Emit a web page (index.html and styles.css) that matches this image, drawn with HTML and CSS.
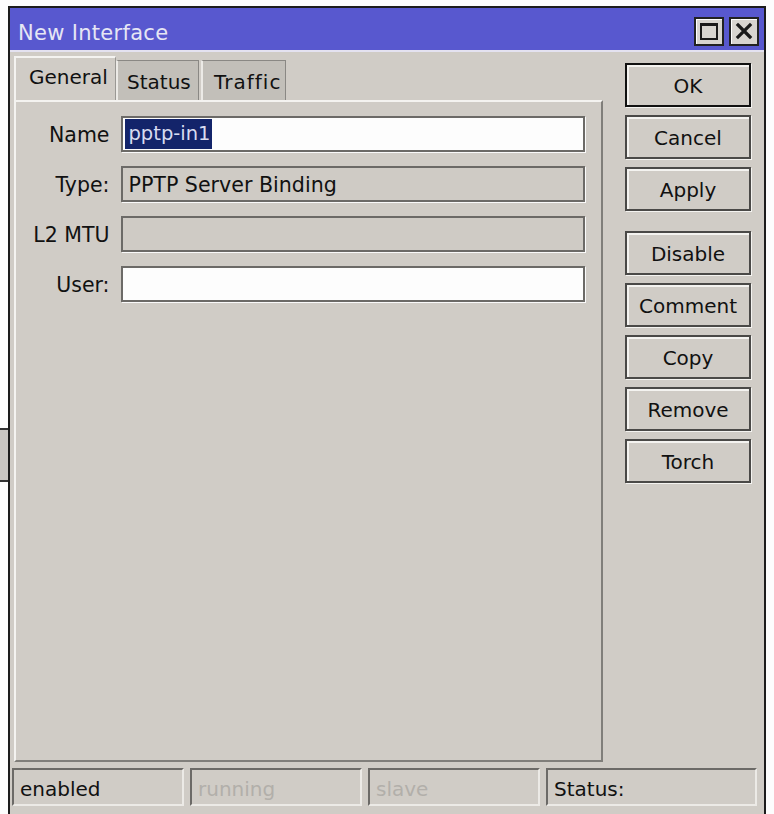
FILE: index.html
```html
<!DOCTYPE html>
<html>
<head>
<meta charset="utf-8">
<link rel="stylesheet" href="styles.css">
</head>
<body>
<div class="desk">
  <div class="behind"></div>
  <div class="window">
    <div class="titlebar">
      <span class="title">New Interface</span>
      <div class="tbtns">
        <div class="tbtn"><span class="maxbox"></span></div>
        <div class="tbtn">
          <svg width="18" height="18" viewBox="0 0 18 18"><path d="M3 3L15 15M15 3L3 15" stroke="#1a1a1a" stroke-width="3.2" stroke-linecap="square"/></svg>
        </div>
      </div>
    </div>
    <div class="body">
      <div class="left">
        <div class="tabs">
          <div class="tab active">General</div>
          <div class="tab t2">Status</div>
          <div class="tab t3">Traffic</div>
        </div>
        <div class="panel">
          <div class="row"><label class="lbl">Name</label><div class="field white"><span class="sel">pptp-in1</span></div></div>
          <div class="row"><label class="lbl">Type:</label><div class="field">PPTP Server Binding</div></div>
          <div class="row"><label class="lbl">L2 MTU</label><div class="field"></div></div>
          <div class="row"><label class="lbl">User:</label><div class="field white"></div></div>
        </div>
      </div>
      <div class="right">
        <div class="btn default">OK</div>
        <div class="btn">Cancel</div>
        <div class="btn">Apply</div>
        <div class="btn spaced">Disable</div>
        <div class="btn">Comment</div>
        <div class="btn">Copy</div>
        <div class="btn">Remove</div>
        <div class="btn">Torch</div>
      </div>
    </div>
    <div class="statusbar">
      <div class="seg s1">enabled</div>
      <div class="seg s2 dim">running</div>
      <div class="seg s3 dim">slave</div>
      <div class="seg s4">Status:</div>
    </div>
  </div>
</div>
</body>
</html>
```
FILE: styles.css
```css
* { box-sizing: border-box; }
body {
  margin: 0;
  background: #fff;
  font-family: "DejaVu Sans", Verdana, sans-serif;
  font-size: 20px;
  color: #111;
}
.desk {
  position: relative;
  width: 774px;
  height: 814px;
  overflow: hidden;
  background: #fdfdfd;
}
.behind {
  position: absolute;
  left: -20px;
  top: 428px;
  width: 30px;
  height: 54px;
  background: #c9c6c2;
  border-top: 2px solid #333;
  border-bottom: 2px solid #333;
}
.window {
  position: absolute;
  left: 8px;
  top: 6px;
  width: 758px;
  height: 830px;
  border: 2px solid #1c1c1c;
  background: #d0ccc6;
}
.titlebar {
  height: 44px;
  background: #5858cf;
  border-bottom: 2px solid #e4e2f0;
  display: flex;
  align-items: center;
  justify-content: space-between;
  padding: 4px 5px 0 8px;
}
.title {
  color: #e6e6f4;
  font-size: 21px;
  letter-spacing: 0.3px;
  margin-top: 3px;
}
.tbtns { display: flex; gap: 5px; }
.tbtn {
  width: 30px;
  height: 29px;
  background: #d8d5d0;
  border: 2px solid #222;
  box-shadow: inset 1px 1px 0 #fff;
  display: flex;
  align-items: center;
  justify-content: center;
}
.maxbox {
  width: 18px;
  height: 17px;
  border: 2px solid #1a1a1a;
  border-top-width: 3px;
}
.body {
  display: flex;
  padding: 2px 0 0 4px;
}
.left {
  width: 589px;
  display: flex;
  flex-direction: column;
}
.tabs {
  display: flex;
  height: 46px;
  align-items: flex-end;
}
.tab {
  height: 40px;
  background: #c2bfb9;
  border: 1px solid #8a8884;
  border-left: 2px solid #eceae6;
  border-bottom: none;
  display: flex;
  align-items: center;
  padding-top: 2px;
}
.tab.t2 { width: 83px; padding-left: 9px; margin-left: 0; }
.tab.t3 { width: 85px; padding-left: 11px; margin-left: 2px; letter-spacing: 1px; }
.tab.active {
  width: 102px;
  height: 44px;
  background: #d0ccc6;
  border: none;
  border-left: 2px solid #f4f3f0;
  border-top: 2px solid #f4f3f0;
  border-right: 1px solid #9a9894;
  padding: 0 0 4px 13px;
}
.panel {
  height: 662px;
  border-left: 2px solid #f4f3f0;
  border-top: 2px solid #f4f3f0;
  border-right: 2px solid #807e7a;
  border-bottom: 2px solid #807e7a;
  padding: 14px 16px 0 0;
  display: flex;
  flex-direction: column;
  gap: 14px;
}
.row {
  display: flex;
  align-items: center;
  height: 36px;
}
.lbl {
  width: 94px;
  text-align: right;
  margin-right: 12px;
  font-size: 20.5px;
  padding-top: 2px;
}
.field {
  width: 466px;
  height: 36px;
  border: 2px solid #6c6a67;
  box-shadow: 1px 1px 0 #fafafa;
  background: #cfcbc5;
  padding: 2px 5px 0 5px;
  display: flex;
  align-items: center;
  font-size: 20.6px;
}
.field.white { background: #fdfdfd; padding: 0 2px; }
.sel {
  background: #13246a;
  color: #d8dcf0;
  line-height: 30px;
  padding: 0 2px 0 3px;
  font-size: 19.5px;
}
.right {
  width: 126px;
  margin-left: 22px;
  padding-top: 9px;
  display: flex;
  flex-direction: column;
  gap: 8px;
}
.btn {
  height: 44px;
  border: 2px solid #4a4947;
  box-shadow: inset 2px 2px 0 #f4f3f0, 1px 1px 0 #f4f3f0;
  background: #d0ccc6;
  display: flex;
  align-items: center;
  justify-content: center;
  padding-top: 2px;
}
.btn.default { border-color: #111; }
.btn.spaced { margin-top: 12px; }
.statusbar {
  display: flex;
  margin-top: 6px;
  padding-left: 2px;
  gap: 6px;
}
.seg {
  height: 38px;
  border-top: 2px solid #6c6a67;
  border-left: 2px solid #6c6a67;
  border-bottom: 2px solid #eceae6;
  border-right: 2px solid #eceae6;
  padding: 3px 0 0 6px;
  display: flex;
  align-items: center;
}
.s1, .s2, .s3 { width: 172px; }
.s4 { width: 211px; }
.dim { color: #b2afaa; }
```
